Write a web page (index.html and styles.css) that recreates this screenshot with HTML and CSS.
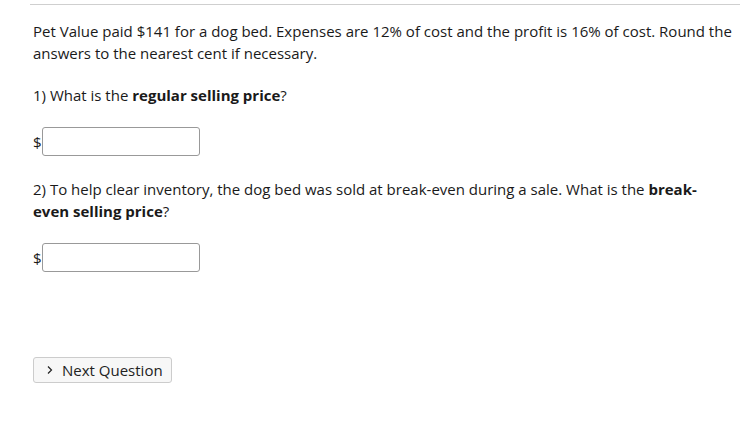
FILE: index.html
```html
<!DOCTYPE html>
<html>
<head>
<meta charset="utf-8">
<link rel="stylesheet" href="styles.css">
</head>
<body>
<div class="page">
  <div class="rule"></div>
  <p class="intro">Pet Value paid $141 for a dog bed. Expenses are 12% of cost and the profit is 16% of cost. Round the answers to the nearest cent if necessary.</p>
  <p class="q q1">1) What is the <b>regular selling price</b>?</p>
  <div class="answer"><span class="cur">$</span><input class="field" type="text"></div>
  <p class="q q2">2) To help clear inventory, the dog bed was sold at break-even during a sale. What is the <b>break-even selling price</b>?</p>
  <div class="answer"><span class="cur">$</span><input class="field" type="text"></div>
  <button class="next"><svg class="chev" width="8" height="10" viewBox="0 0 8 10"><path d="M2 1.5 L5.5 5 L2 8.5" fill="none" stroke="#222" stroke-width="1.2"/></svg>Next Question</button>
</div>
</body>
</html>
```
FILE: styles.css
```css
html, body { margin: 0; padding: 0; background: #fff; }
body { font-family: "Open Sans", sans-serif; font-size: 15px; color: #1a1a1a; }
.page { padding: 4px 0 0 33px; }
.rule { height: 1px; background: #cfcfcf; margin-left: -3px; margin-bottom: 15px; }
p { margin: 0; line-height: 22px; }
.intro, .q { width: 699px; }
.q1 { margin-top: 20px; }
.q2 { margin-top: 22px; }
.answer { display: flex; align-items: center; margin-top: 21px; }
.cur { font-size: 15px; margin-right: 0; }
.field { width: 158px; height: 29px; box-sizing: border-box; border: 1px solid #999; border-radius: 3px; padding: 0; margin: 0; }
.next { margin-top: 85px; display: flex; align-items: center; gap: 8px; height: 26px; width: 139px; box-sizing: border-box; padding: 0 0 0 12px; border: 1px solid #ccc; border-radius: 3px; background: #f7f7f7; font-family: "Open Sans", sans-serif; font-size: 15px; color: #222; }
.chev { flex: none; }
```
